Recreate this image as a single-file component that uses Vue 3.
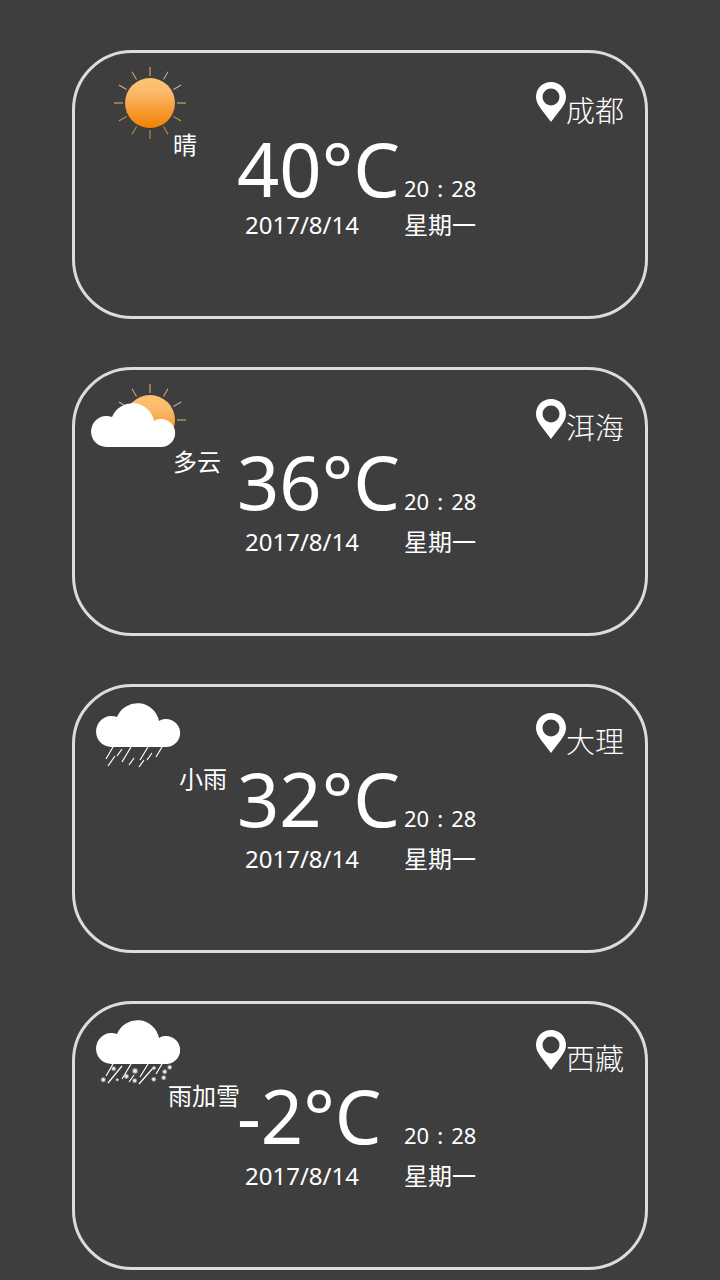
<script setup>
const date = '2017/8/14'
const day = '星期一'
const cards = [
  { kind: 'sunny', label: '晴', temp: '40°C', city: '成都' },
  { kind: 'cloudy', label: '多云', temp: '36°C', city: '洱海' },
  { kind: 'rain', label: '小雨', temp: '32°C', city: '大理' },
  { kind: 'sleet', label: '雨加雪', temp: '-2°C', city: '西藏' },
]

const allRays = Array.from({ length: 12 }, (_, i) => i * 30)
// Behind a cloud only the upper rays of the sun are seen.
const raysFor = (kind) => (kind === 'cloudy' ? allRays.filter((a) => a <= 90 || a >= 300) : allRays)
const rainLines = 'M23 48L16 60M25 57L18 67M32 50L27 57M41 48L32 63M44 59L39 66M58 48L50 61M54 61L49 68M62 54L57 61M72 48L66 58'
const sleetLines = 'M23 48L16 60M32 50L18 67M41 48L32 63M44 59L39 66M58 48L50 61M63 52L49 68M72 48L66 58'
const flakes = [
  [23.7, 52.7, 2.6], [45, 55, 3.2], [64, 52, 2.2], [79.7, 51.3, 2.6],
  [74.7, 55.7, 2.6], [73.7, 61.7, 2.6], [63.7, 63.3, 2.6], [44.7, 64.7, 2.6],
  [36.3, 60.3, 2.8], [27.3, 63.7, 1.7], [13.3, 63.7, 2.8],
]
</script>

<template>
  <main class="page">
    <article v-for="c in cards" :key="c.city" class="card" :class="c.kind">
      <div class="weather">
        <svg class="icon" viewBox="0 0 100 68" aria-hidden="true">
          <defs>
            <linearGradient :id="'sun-' + c.kind" x1="0" y1="0" x2="0" y2="1">
              <stop offset="0" stop-color="#fec46c" />
              <stop offset="0.25" stop-color="#fcbb70" />
              <stop offset="1" stop-color="#f08200" />
            </linearGradient>
            <radialGradient :id="'flake-' + c.kind">
              <stop offset="0" stop-color="#fff" />
              <stop offset="0.45" stop-color="#ddd" />
              <stop offset="1" stop-color="#aaa" stop-opacity="0.3" />
            </radialGradient>
          </defs>
          <g v-if="c.kind === 'sunny' || c.kind === 'cloudy'">
            <line
              v-for="a in raysFor(c.kind)" :key="a" x1="60" y1="11" x2="60" y2="2"
              :transform="`rotate(${a} 60 38)`"
              :stroke="a > 90 && a < 270 ? '#c98d43' : '#d6ac7c'"
              :stroke-width="a % 90 === 0 ? 2 : 1"
              :opacity="a % 90 === 0 ? 0.55 : 1"
            />
            <circle cx="60" cy="38" r="25" :fill="`url(#sun-${c.kind})`" />
          </g>
          <path
            v-if="c.kind !== 'sunny'" fill="#fff"
            :transform="c.kind === 'cloudy' ? '' : 'translate(5 -17)'"
            d="M16.500 65A15.500 15.500 0 1 1 22 35A22 22 0 0 1 64 39A14 14 0 1 1 72 65Z"
          />
          <path v-if="c.kind === 'rain'" :d="rainLines" stroke="#fff" stroke-width="1.2" />
          <g v-if="c.kind === 'sleet'">
            <path :d="sleetLines" stroke="#fff" stroke-width="1.2" />
            <circle
              v-for="(f, i) in flakes" :key="i" :cx="f[0]" :cy="f[1]" :r="f[2]"
              fill="url(#flake-sleet)"
            />
          </g>
        </svg>
        <span class="label">{{ c.label }}</span>
      </div>

      <div class="reading">
        <strong class="temp">{{ c.temp }}</strong>
        <time class="clock">20<span class="colon">:</span>28</time>
        <time class="date">{{ date }}</time>
        <span class="day">{{ day }}</span>
      </div>

      <div class="place">
        <svg class="pin" viewBox="0 0 30 40" aria-hidden="true">
          <path
            fill="#fff" fill-rule="evenodd"
            d="M15 0C23.500 0 30 6.500 30 15C30 23 22 30 15 40C8 30 0 23 0 15C0 6.500 6.500 0 15 0ZM15 6.500A8.500 8.500 0 1 0 15 23.500A8.500 8.500 0 1 0 15 6.500Z"
          />
        </svg>
        <span class="city">{{ c.city }}</span>
      </div>
    </article>
  </main>
</template>

<style>
body {
  margin: 0;
  background: #3e3e3f;
}
</style>

<style scoped>
.page {
  display: flex;
  flex-direction: column;
  gap: 48px;
  padding: 50px 10% 11px;
  color: #fff;
  font-family: "Noto Sans", "Noto Sans CJK SC", sans-serif;
}

.card {
  box-sizing: border-box;
  display: grid;
  grid-template-columns: 162px 1fr auto;
  align-items: start;
  min-height: 269px;
  padding: 12px 21px 12px 0;
  border: 3px solid #dcdcdc;
  border-radius: 60px;
}

.weather {
  display: flex;
  flex-direction: column;
}

.icon {
  width: 100px;
  height: 68px;
  margin-left: 15px;
  overflow: visible;
}

.label {
  padding-left: 98px;
  font-size: 24px;
  line-height: 24px;
  white-space: nowrap;
}

.rain .label {
  padding-left: 104px;
}

.sleet .label {
  padding-left: 93px;
}

.reading {
  display: grid;
  grid-template-columns: 167px auto;
  row-gap: 4px;
  justify-content: start;
  align-items: baseline;
  padding-top: 60px;
}

.sunny .reading {
  row-gap: 0;
  padding-top: 64px;
}

.temp {
  font-size: 74px;
  line-height: 80px;
  font-weight: 400;
  white-space: nowrap;
}

.clock {
  font-size: 22px;
  line-height: 24px;
  white-space: nowrap;
}

.colon {
  display: inline-block;
  width: 22px;
  text-align: center;
}

.date,
.day {
  font-size: 24px;
  line-height: 32px;
  white-space: nowrap;
}

.date {
  padding-left: 8px;
}

.place {
  display: flex;
  align-items: flex-start;
  padding-top: 17px;
}

.rain .place,
.sleet .place {
  padding-top: 14px;
}

.pin {
  width: 30px;
  height: 40px;
}

.city {
  padding-top: 12px;
  font-family: "Noto Sans CJK SC", sans-serif;
  font-size: 29px;
  font-weight: 300;
  line-height: 30px;
}
</style>
